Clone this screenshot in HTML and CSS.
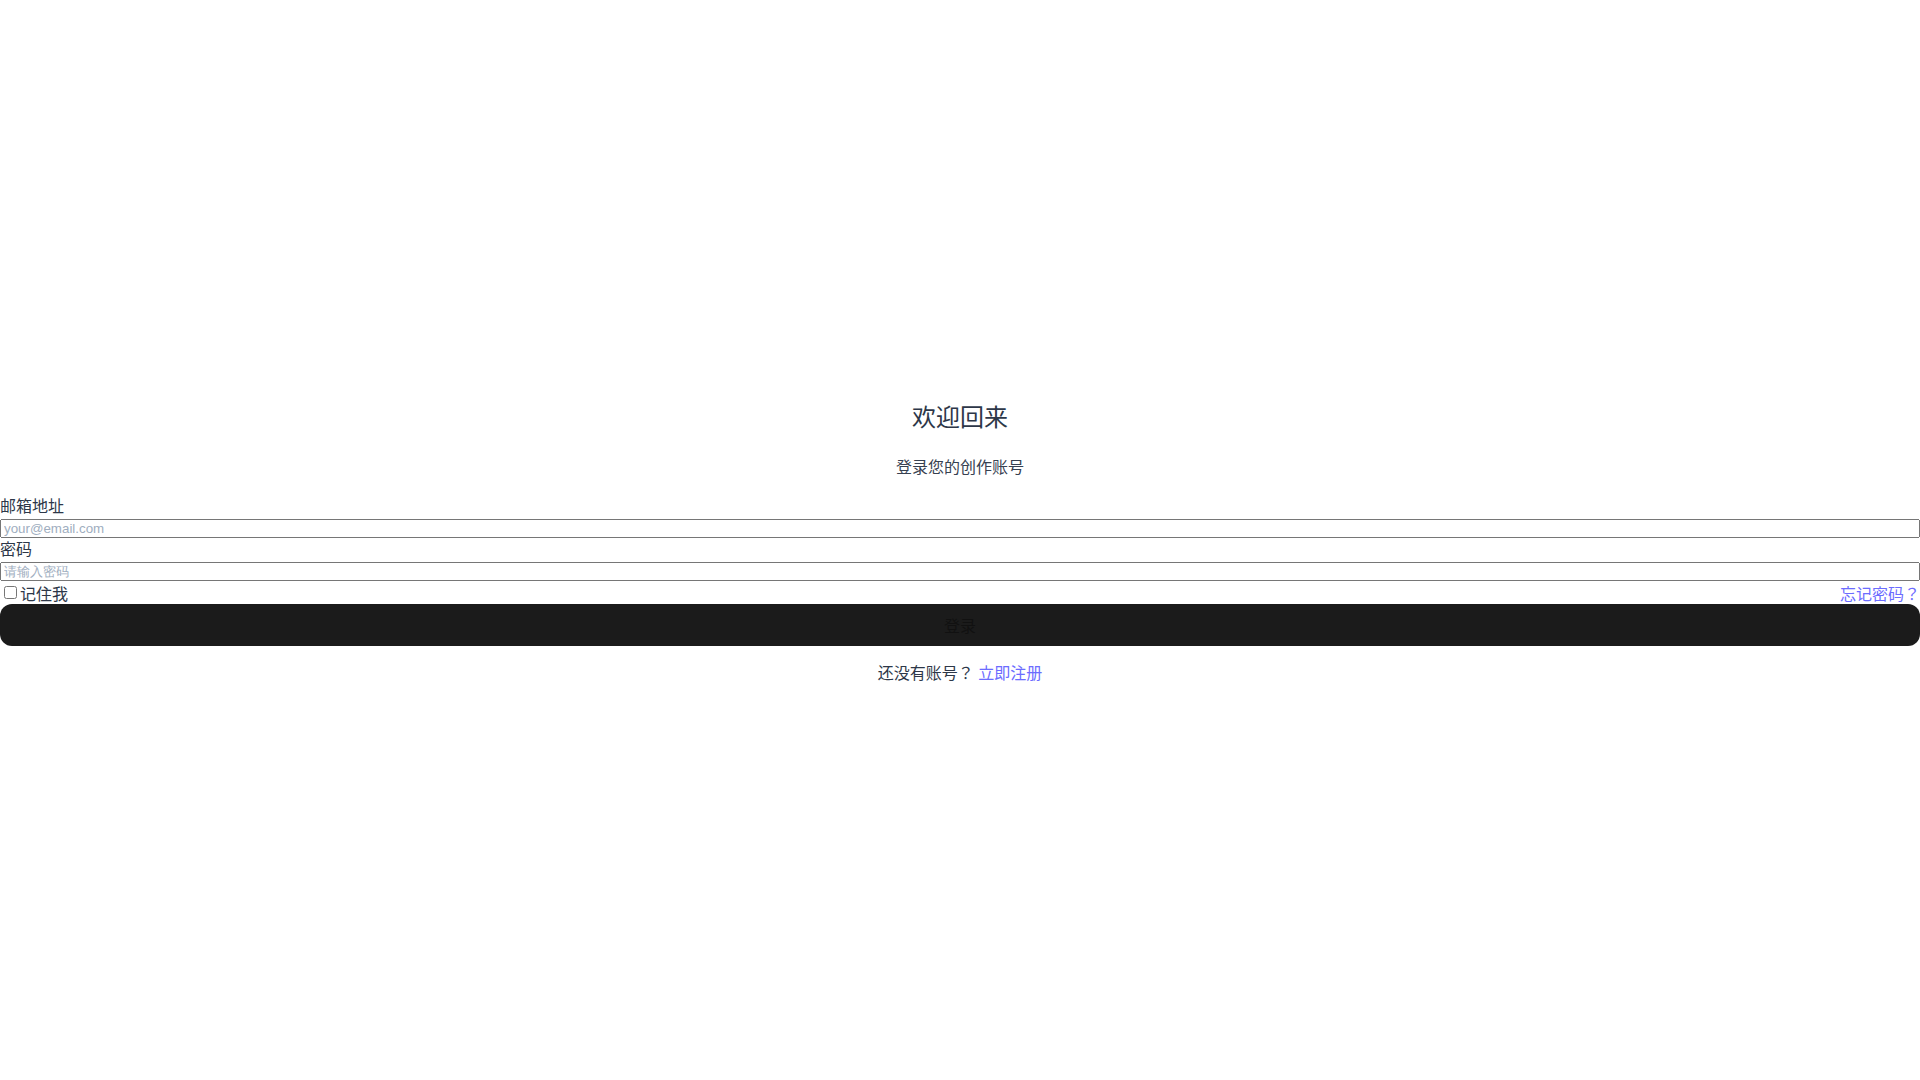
FILE: index.html
```html
<!DOCTYPE html>
<html lang="en">
<head>
<meta charset="utf-8">
<title>登录</title>
<link rel="stylesheet" href="styles.css">
</head>
<body>
<main class="page">
  <div class="card">
    <div class="header">
      <h1 class="title">欢迎回来</h1>
      <p class="subtitle">登录您的创作账号</p>
    </div>
    <form class="form">
      <label class="label" for="email">邮箱地址</label>
      <input class="input" id="email" type="email" placeholder="your@email.com">
      <label class="label" for="password">密码</label>
      <input class="input" id="password" type="password" placeholder="请输入密码">
      <div class="row">
        <label class="remember"><input type="checkbox" class="check">记住我</label>
        <a class="link" href="#">忘记密码？</a>
      </div>
      <button type="button" class="submit">登录</button>
    </form>
    <p class="footer">还没有账号？ <a class="link" href="#">立即注册</a></p>
  </div>
</main>
</body>
</html>
```
FILE: styles.css
```css
html, body {
  margin: 0;
  padding: 0;
  background: #ffffff;
}
body {
  font-family: "Liberation Sans", "Noto Sans CJK JP", sans-serif;
  font-size: 16px;
  color: #2d3748;
}
.page {
  box-sizing: border-box;
  min-height: 100vh;
  padding-top: 8px;
  display: flex;
  align-items: center;
}
.card {
  width: 100%;
}
.header {
  text-align: center;
  margin-bottom: 15px;
}
.title {
  margin: 0;
  font-size: 24px;
  line-height: 32px;
  font-weight: normal;
  color: #2d3748;
}
.subtitle {
  margin: 22px 0 0;
  font-size: 16px;
  line-height: 24px;
  color: #374151;
}
.form {
  display: flex;
  flex-direction: column;
}
.label {
  display: block;
  line-height: 24px;
}
.input {
  width: 100%;
  height: 19px;
  box-sizing: border-box;
  margin: 0;
}
.input::placeholder {
  color: #a0aec0;
}
.row {
  display: flex;
  justify-content: space-between;
  align-items: center;
  height: 23px;
}
.remember {
  display: flex;
  align-items: center;
}
.check {
  margin: 0 3px 0 4px;
}
.link {
  color: #6c6cff;
  text-decoration: none;
}
.submit {
  display: block;
  width: 100%;
  height: 42px;
  border: none;
  border-radius: 12px;
  background: #1b1b1b;
  color: #111111;
  font-family: inherit;
  font-size: 16px;
  cursor: pointer;
}
.footer {
  text-align: center;
  margin: 16px 0 0;
  line-height: 24px;
}
```
